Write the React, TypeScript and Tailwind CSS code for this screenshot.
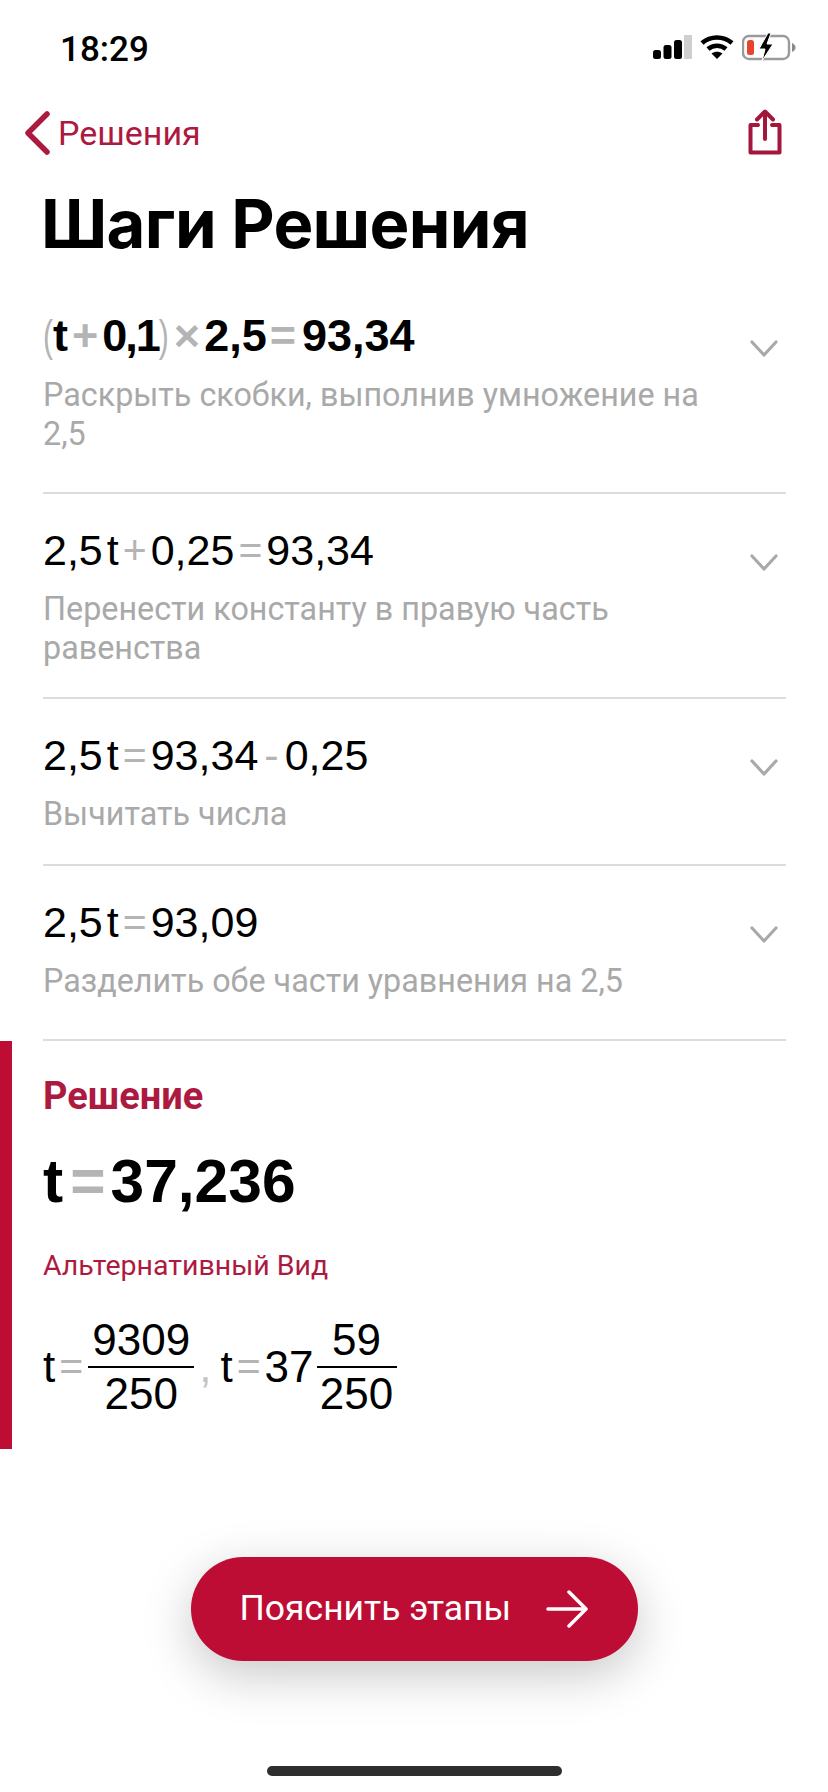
const font = "font-['Roboto',sans-serif]";
const mathFont = "font-['Liberation_Sans',Arial,sans-serif]";

const Op = ({ children, className = "" }: { children: React.ReactNode; className?: string }) => (
  <span className={`text-[#b4b4b4] ${className}`}>{children}</span>
);

const StatusIcons = () => (
  <div className="mt-[4px] flex items-center gap-[8px]">
    <svg width="40" height="26" viewBox="0 0 40 26">
      <rect x="1" y="16" width="8" height="9" rx="2.500" fill="#000" />
      <rect x="11.500" y="11" width="8" height="14" rx="2.500" fill="#000" />
      <rect x="22" y="6" width="8" height="19" rx="2.500" fill="#000" />
      <rect x="32" y="1" width="8" height="24" rx="1" fill="#cfcfcf" />
    </svg>
    <svg width="34" height="26" viewBox="0 0 34 26" fill="none" stroke="#000" strokeWidth="4.500">
      <path d="M2 9C10.500 1.500 23.500 1.500 32 9" />
      <path d="M8 15C13 10.500 21 10.500 26 15" />
      <path d="M17 25l-5.500-5.500c3.300-2.500 7.700-2.500 11 0z" fill="#000" stroke="none" />
    </svg>
    <svg width="54" height="28" viewBox="0 0 54 28" fill="none">
      <rect x="1" y="3" width="46" height="23" rx="6" stroke="#9a9a9a" strokeWidth="2.400" />
      <rect x="5" y="7" width="7" height="15" rx="2.500" fill="#e8432f" />
      <path d="M26 0l-9 16h6l-3 12 11-17h-6l4-11z" fill="#000" stroke="#fff" strokeWidth="1" />
      <path d="M50 10c2 1 3.500 2.500 3.500 4.500s-1.500 3.500-3.500 4.500z" fill="#8a8a8a" />
    </svg>
  </div>
);

const Step = ({
  math,
  text,
  className,
}: {
  math: React.ReactNode;
  text: React.ReactNode;
  className: string;
}) => (
  <div className={`border-b-2 border-[#dcdcdc] ${className}`}>
    <div className="flex items-start justify-between pr-[8px]">
      {math}
      <svg className="mt-[30px]" width="28" height="17" viewBox="0 0 28 17" fill="none" stroke="#a9a9a9" strokeWidth="3.200" strokeLinecap="round" strokeLinejoin="round">
        <path d="M2 2l12 13L26 2" />
      </svg>
    </div>
    <p className="mt-[14px] pr-[80px] text-[32.300px] leading-[39px] text-[#a9a9a9]">{text}</p>
  </div>
);

const Fraction = ({ top, bottom, width }: { top: string; bottom: string; width: string }) => (
  <span className={`flex flex-col items-center ${width}`}>
    <span className="text-[44px] leading-[46px]">{top}</span>
    <span className="my-[3px] h-[2px] w-full bg-black" />
    <span className="text-[44px] leading-[46px]">{bottom}</span>
  </span>
);

export default function App() {
  return (
    <div className={`relative h-[1792px] w-[828px] overflow-hidden bg-white text-black ${font}`}>
      <div className="flex h-[100px] items-start justify-between pl-[60px] pr-[32px] pt-[29px]">
        <span className="text-[35px] font-medium leading-[42px]">18:29</span>
        <StatusIcons />
      </div>

      <div className="flex h-[68px] items-center justify-between pl-[22px] pr-[46px] text-[#ad1a3f]">
        <div className="flex items-center gap-[4px]">
          <svg className="mt-[-2px]" width="32" height="46" viewBox="0 0 32 46" fill="none" stroke="currentColor" strokeWidth="5.500" strokeLinecap="round" strokeLinejoin="round">
            <path d="M25 4L6 23l19 19" />
          </svg>
          <span className="mt-[-2px] text-[34px] leading-[40px]">Решения</span>
        </div>
        <svg className="mt-[-5px]" width="34" height="46" viewBox="0 0 34 46" fill="none" stroke="#a3173d" strokeWidth="4" strokeLinecap="round" strokeLinejoin="round">
          <path d="M10 16H2.500v27.500h29V16H24" />
          <path d="M17 30V3M9 10.500L17 2.500l8 8" />
        </svg>
      </div>

      <h1 className="mt-[20px] pl-[41px] font-['Inter',sans-serif] text-[67px] font-bold leading-[72px] tracking-[-0.01em]">Шаги Решения</h1>

      <div className="ml-[43px] mr-[42px] mt-[48px]">
        <Step
          className="h-[186px] pt-[2px]"
          math={
            <div className={`flex items-center text-[45px] font-bold leading-[52px] ${mathFont}`}>
              <Op className="scale-y-[1.5] text-[30px] font-normal">(</Op>
              <span>t</span>
              <Op className="mx-[4px]">+</Op>
              <span className="tracking-[-2px]">0,1</span>
              <Op className="scale-y-[1.5] text-[30px] font-normal">)</Op>
              <Op className="ml-[5px] mr-[4px]">×</Op>
              <span>2,5</span>
              <Op className="ml-[3px] mr-[6px]">=</Op>
              <span>93,34</span>
            </div>
          }
          text="Раскрыть скобки, выполнив умножение на 2,5"
        />
        <Step
          className="h-[205px] pt-[30px]"
          math={
            <div className={`flex items-center text-[43px] leading-[52px] ${mathFont}`}>
              <span>2,5</span>
              <span className="ml-[4px]">t</span>
              <Op className="mx-[4px] text-[41px]">+</Op>
              <span>0,25</span>
              <Op className="mx-[4px] text-[41px]">=</Op>
              <span>93,34</span>
            </div>
          }
          text="Перенести константу в правую часть равенства"
        />
        <Step
          className="h-[167px] pt-[30px]"
          math={
            <div className={`flex items-center text-[43px] leading-[52px] ${mathFont}`}>
              <span>2,5</span>
              <span className="ml-[4px]">t</span>
              <Op className="mx-[4px] text-[41px]">=</Op>
              <span>93,34</span>
              <Op className="mx-[6px]">-</Op>
              <span>0,25</span>
            </div>
          }
          text="Вычитать числа"
        />
        <Step
          className="h-[175px] pt-[30px]"
          math={
            <div className={`flex items-center text-[43px] leading-[52px] ${mathFont}`}>
              <span>2,5</span>
              <span className="ml-[4px]">t</span>
              <Op className="mx-[4px] text-[41px]">=</Op>
              <span>93,09</span>
            </div>
          }
          text="Разделить обе части уравнения на 2,5"
        />
      </div>

      <div className="h-[408px] border-l-[12px] border-[#be0d34] pl-[31px] pt-[32px]">
        <p className="text-[38px] font-bold leading-[46px] text-[#ad1a3f]">Решение</p>
        <div className={`mt-[28px] flex items-center text-[60.500px] font-bold leading-[68px] ${mathFont}`}>
          <span>t</span>
          <Op className="ml-[7px] mr-[5px]">=</Op>
          <span>37,236</span>
        </div>
        <p className="mt-[34px] text-[28.500px] leading-[34px] text-[#ad1a3f]">Альтернативный Вид</p>
        <div className={`mt-[34px] flex items-center text-[44px] ${mathFont}`}>
          <span>t</span>
          <Op className="mx-[4px] text-[41px]">=</Op>
          <Fraction top="9309" bottom="250" width="ml-[1px] w-[106px]" />
          <Op className="ml-[5px] mr-[9px] text-[#c4c4c4]">,</Op>
          <span>t</span>
          <Op className="mx-[4px] text-[41px]">=</Op>
          <span>37</span>
          <Fraction top="59" bottom="250" width="ml-[3px] w-[80px]" />
        </div>
      </div>

      <div className="mt-[108px] flex justify-center">
        <button className="flex h-[104px] w-[447px] items-center justify-between rounded-full bg-[#be0d34] pl-[49px] pr-[50px] text-white shadow-[0_14px_50px_rgba(0,0,0,0.22)]">
          <span className="text-[35.500px]">Пояснить этапы</span>
          <svg width="42" height="40" viewBox="0 0 42 40" fill="none" stroke="currentColor" strokeWidth="3.500" strokeLinecap="round" strokeLinejoin="round">
            <path d="M2 20h38M23 3l17 17-17 17" />
          </svg>
        </button>
      </div>

      <div className="absolute bottom-[16px] left-[267px] h-[10px] w-[295px] rounded-full bg-[#2e2e2e]" />
    </div>
  );
}
